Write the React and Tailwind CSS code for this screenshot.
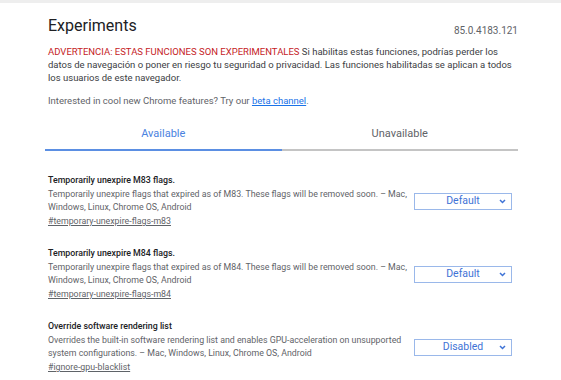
import React from "react";

const flags = [
  {
    title: "Temporarily unexpire M83 flags.",
    desc: "Temporarily unexpire flags that expired as of M83. These flags will be removed soon. – Mac, Windows, Linux, Chrome OS, Android",
    link: "#temporary-unexpire-flags-m83",
    value: "Default",
  },
  {
    title: "Temporarily unexpire M84 flags.",
    desc: "Temporarily unexpire flags that expired as of M84. These flags will be removed soon. – Mac, Windows, Linux, Chrome OS, Android",
    link: "#temporary-unexpire-flags-m84",
    value: "Default",
  },
  {
    title: "Override software rendering list",
    desc: "Overrides the built-in software rendering list and enables GPU-acceleration on unsupported system configurations. – Mac, Windows, Linux, Chrome OS, Android",
    link: "#ignore-gpu-blacklist",
    value: "Disabled",
  },
];

function Select({ value }) {
  return (
    <div className="w-[98px] h-[17px] border border-[#9ab8ea] flex items-center justify-center relative text-[10.5px] text-[#3f73d6]">
      <span>{value}</span>
      <svg className="absolute right-[5px] top-[5px] w-[7px] h-[5px]" viewBox="0 0 7 5">
        <path d="M1 1 L3.5 3.5 L6 1" fill="none" stroke="#3f73d6" strokeWidth="1.5" />
      </svg>
    </div>
  );
}

export default function App() {
  return (
    <div className="w-[561px] h-[380px] bg-white overflow-hidden font-['Roboto',sans-serif]">
      <div className="h-[3px] bg-[#eeeeee]" />
      <div className="ml-[48px] w-[470px]">
        {/* header */}
        <div className="flex items-end justify-between pt-[13px]">
          <h1 className="text-[16px] leading-[20px] text-[#202124]">Experiments</h1>
          <span className="text-[10px] leading-[14px] text-[#5f6368] mb-[-2px]">85.0.4183.121</span>
        </div>
        <p className="mt-[9px] text-[9.5px] leading-[13px] text-[#3c4043]">
          <span className="text-[#c5221f]">ADVERTENCIA: ESTAS FUNCIONES SON EXPERIMENTALES</span> Si habilitas estas funciones, podrías perder los datos de navegación o poner en riesgo tu seguridad o privacidad. Las funciones habilitadas se aplican a todos los usuarios de este navegador.
        </p>
        <p className="mt-[10px] text-[9.5px] leading-[13px] text-[#5f6368]">
          Interested in cool new Chrome features? Try our{" "}
          <span className="text-[#1a73e8] underline">beta channel</span>.
        </p>

        {/* tabs */}
        <div className="mt-[12px] flex ml-[-3px]">
          <div className="flex-1 h-[32px] flex items-center justify-center text-[11px] text-[#4a82e0] border-b-2 border-[#5b8fe3]">
            Available
          </div>
          <div className="flex-1 h-[32px] flex items-center justify-center text-[11px] text-[#5f6368] border-b-2 border-[#c4c4c4]">
            Unavailable
          </div>
        </div>

        {/* flags */}
        <div className="mt-[23px] flex flex-col gap-[19px]">
          {flags.map((f) => (
            <div key={f.link} className="flex items-center">
              <div className="w-[364px]">
                <div className="text-[8.8px] leading-[13px] font-medium text-[#202124]">{f.title}</div>
                <div className="text-[8.8px] leading-[13px] text-[#5f6368] mt-[1px]">{f.desc}</div>
                <div className="text-[8.8px] leading-[13px] text-[#5f6368] underline mt-[1px]">{f.link}</div>
              </div>
              <div className="ml-auto mr-[6px]">
                <Select value={f.value} />
              </div>
            </div>
          ))}
        </div>
      </div>
    </div>
  );
}
